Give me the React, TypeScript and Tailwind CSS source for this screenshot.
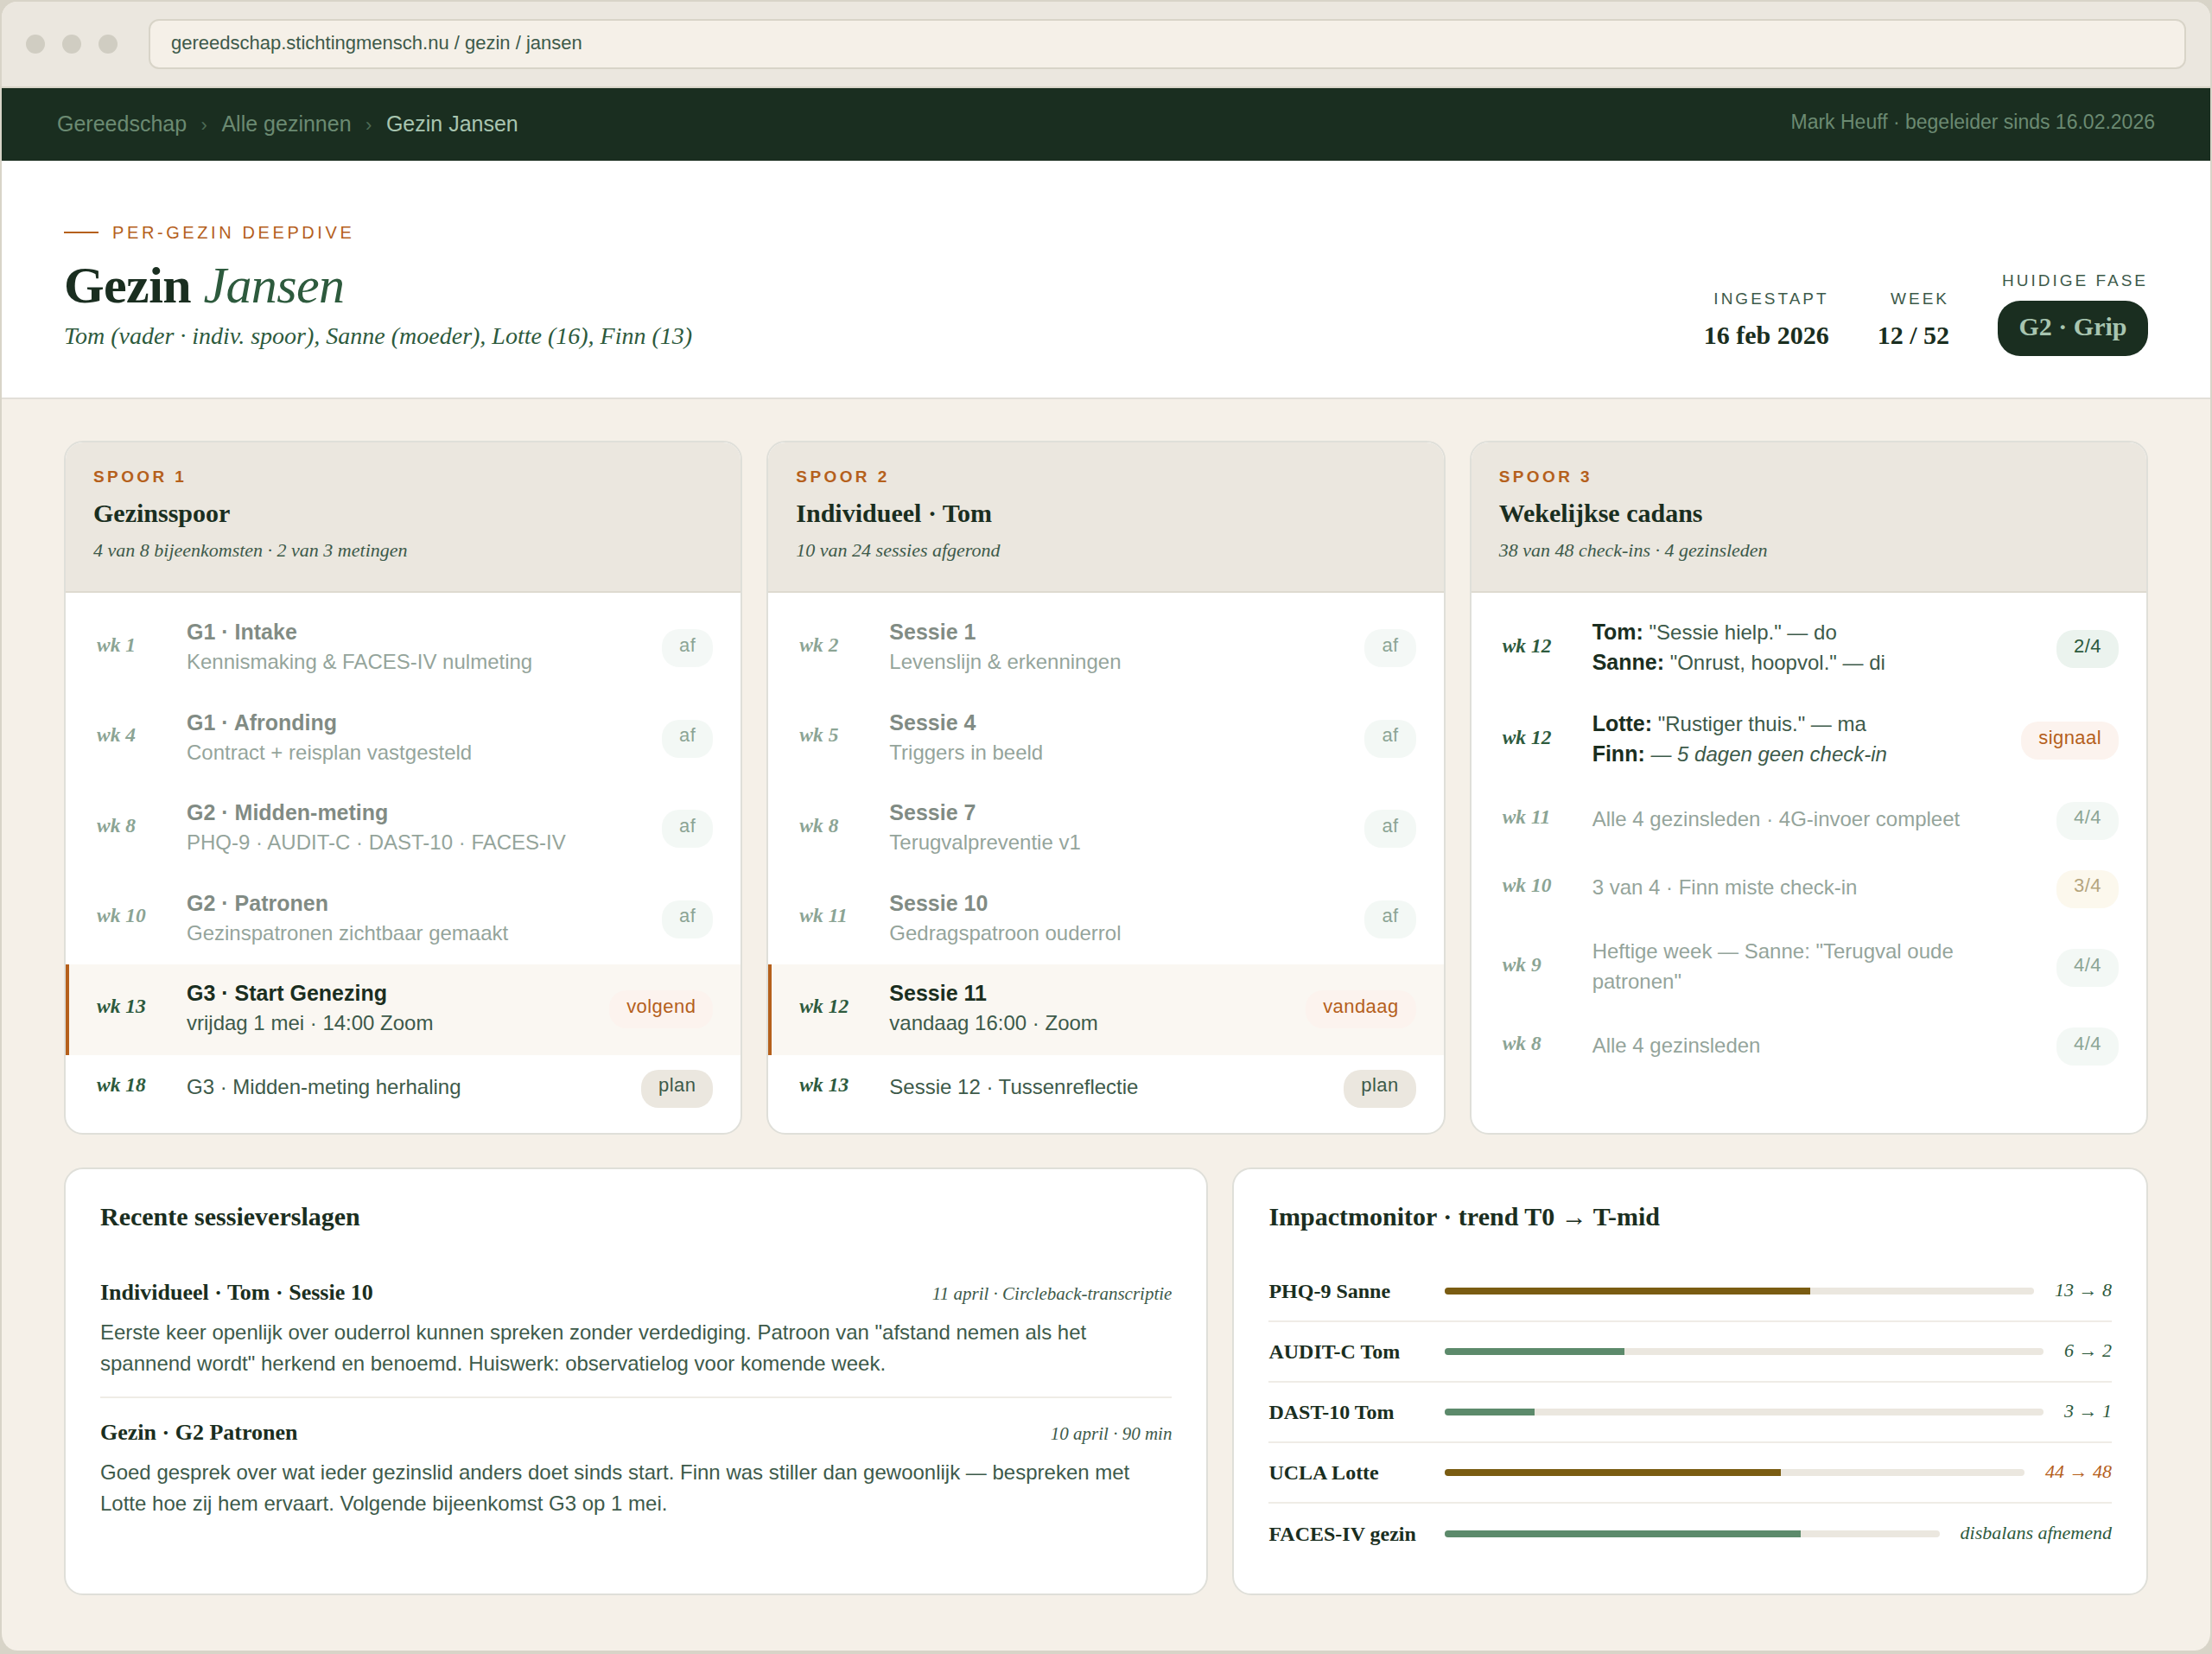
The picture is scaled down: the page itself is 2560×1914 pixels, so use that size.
const serif = "font-['Liberation_Serif',serif]";

type PillKind = "done" | "plan" | "next" | "ok" | "mid";

type Row = {
  wk: string;
  title?: string;
  sub?: string;
  pill: string;
  kind: PillKind;
  faded?: boolean;
  active?: boolean;
};

const pillStyles: Record<PillKind, string> = {
  done: "bg-[#ebf3ee] text-[#2d5a3d]",
  ok: "bg-[#ebf3ee] text-[#2d5a3d]",
  plan: "bg-[#ebe7df] text-[#3d5a4a]",
  next: "bg-[#fcf3ee] text-[#b5601c]",
  mid: "bg-[#faf3e0] text-[#7a5c12]",
};

const spoor1: Row[] = [
  { wk: "wk 1", title: "G1 · Intake", sub: "Kennismaking & FACES-IV nulmeting", pill: "af", kind: "done", faded: true },
  { wk: "wk 4", title: "G1 · Afronding", sub: "Contract + reisplan vastgesteld", pill: "af", kind: "done", faded: true },
  { wk: "wk 8", title: "G2 · Midden-meting", sub: "PHQ-9 · AUDIT-C · DAST-10 · FACES-IV", pill: "af", kind: "done", faded: true },
  { wk: "wk 10", title: "G2 · Patronen", sub: "Gezinspatronen zichtbaar gemaakt", pill: "af", kind: "done", faded: true },
  { wk: "wk 13", title: "G3 · Start Genezing", sub: "vrijdag 1 mei · 14:00 Zoom", pill: "volgend", kind: "next", active: true },
  { wk: "wk 18", sub: "G3 · Midden-meting herhaling", pill: "plan", kind: "plan" },
];

const spoor2: Row[] = [
  { wk: "wk 2", title: "Sessie 1", sub: "Levenslijn & erkenningen", pill: "af", kind: "done", faded: true },
  { wk: "wk 5", title: "Sessie 4", sub: "Triggers in beeld", pill: "af", kind: "done", faded: true },
  { wk: "wk 8", title: "Sessie 7", sub: "Terugvalpreventie v1", pill: "af", kind: "done", faded: true },
  { wk: "wk 11", title: "Sessie 10", sub: "Gedragspatroon ouderrol", pill: "af", kind: "done", faded: true },
  { wk: "wk 12", title: "Sessie 11", sub: "vandaag 16:00 · Zoom", pill: "vandaag", kind: "next", active: true },
  { wk: "wk 13", sub: "Sessie 12 · Tussenreflectie", pill: "plan", kind: "plan" },
];

const Pill = ({ label, kind }: { label: string; kind: PillKind }) => (
  <span
    className={`h-[44px] shrink-0 rounded-[20px] px-5 pb-[8px] flex items-center text-[22px] tracking-[0.44px] ${pillStyles[kind]}`}
  >
    {label}
  </span>
);

const Week = ({ children }: { children: string }) => (
  <div className={`${serif} w-[80px] shrink-0 pb-[8px] text-[23.5px] leading-[35px] font-bold italic text-[#2d5a3d]`}>
    {children}
  </div>
);

const SessionRow = ({ row }: { row: Row }) => (
  <div
    className={`flex items-center gap-6 border-l-4 pl-8 pr-8 ${row.title ? "h-[104.5px]" : "h-[78px]"} ${
      row.active ? "border-[#b5601c] bg-[#faf7f2]" : "border-transparent"
    } ${row.faded ? "opacity-55" : ""}`}
  >
    <Week>{row.wk}</Week>
    <div className="flex-1 min-w-0 pb-[3px]">
      {row.title && <div className="text-[25px] leading-[35px] font-bold text-[#1a2e20]">{row.title}</div>}
      <div className="text-[24px] leading-[34px] text-[#3d5a4a]">{row.sub}</div>
    </div>
    <Pill label={row.pill} kind={row.kind} />
  </div>
);

const CheckRow = ({
  wk,
  pill,
  kind,
  faded,
  children,
  rowHeight,
}: {
  wk: string;
  pill: string;
  kind: PillKind;
  faded?: boolean;
  children: React.ReactNode;
  rowHeight: string;
}) => (
  <div className={`flex items-center gap-6 border-l-4 border-transparent pl-8 pr-8 ${rowHeight} ${faded ? "opacity-55" : ""}`}>
    <Week>{wk}</Week>
    <div className="flex-1 min-w-0 pb-[4px] text-[24px] leading-[35px] text-[#3d5a4a]">{children}</div>
    <Pill label={pill} kind={kind} />
  </div>
);

const Who = ({ children }: { children: string }) => (
  <strong className="text-[25px] font-bold text-[#1a2e20]">{children}</strong>
);

const SpoorHeader = ({ eyebrow, title, sub }: { eyebrow: string; title: string; sub: string }) => (
  <div className="bg-[#ebe7df] border-b-2 border-[#dedad0] px-8 pt-[28px] pb-[32px]">
    <div className="text-[19px] leading-[24px] font-bold tracking-[3.4px] text-[#b5601c]">{eyebrow}</div>
    <div className={`${serif} mt-[10px] text-[30px] leading-[40px] font-bold text-[#1a2e20]`}>{title}</div>
    <div className={`${serif} mt-[8px] text-[22px] leading-[30px] italic text-[#3d5a4a]`}>{sub}</div>
  </div>
);

const cardClass = "rounded-[22px] border-2 border-[#dfdfd9] bg-white overflow-hidden";

const reports = [
  {
    title: "Individueel · Tom · Sessie 10",
    meta: "11 april · Circleback-transcriptie",
    text: 'Eerste keer openlijk over ouderrol kunnen spreken zonder verdediging. Patroon van "afstand nemen als het spannend wordt" herkend en benoemd. Huiswerk: observatielog voor komende week.',
  },
  {
    title: "Gezin · G2 Patronen",
    meta: "10 april · 90 min",
    text: "Goed gesprek over wat ieder gezinslid anders doet sinds start. Finn was stiller dan gewoonlijk — bespreken met Lotte hoe zij hem ervaart. Volgende bijeenkomst G3 op 1 mei.",
  },
];

const impact = [
  { label: "PHQ-9 Sanne", pct: 62, amber: true, value: "13 → 8" },
  { label: "AUDIT-C Tom", pct: 30, value: "6 → 2" },
  { label: "DAST-10 Tom", pct: 15, value: "3 → 1" },
  { label: "UCLA Lotte", pct: 58, amber: true, value: "44 → 48", warn: true },
  { label: "FACES-IV gezin", pct: 72, value: "disbalans afnemend" },
];

const Stat = ({ label, value }: { label: string; value: string }) => (
  <div className="text-right">
    <div className="text-[19px] leading-[24px] tracking-[3px] text-[#3d5a4a] mb-[6px]">{label}</div>
    <div className={`${serif} text-[30px] leading-[48px] font-bold text-[#1a2e20]`}>{value}</div>
  </div>
);

export default function App() {
  return (
    <div className="min-h-screen bg-[#d8d4c8] font-['Liberation_Sans',sans-serif]">
      <div className="h-[1910px] flex flex-col rounded-[20px] border-x-2 border-t-2 border-[#d8d4c8] bg-[#f5f0e8] overflow-hidden">
        {/* Browser chrome */}
        <div className="h-[100px] shrink-0 flex items-center gap-[20px] bg-[#ebe7df] border-b-2 border-[#d8d4c8] px-[28px]">
          <span className="w-[22px] h-[22px] rounded-full bg-[#d0cdc2]" />
          <span className="w-[22px] h-[22px] rounded-full bg-[#d0cdc2]" />
          <span className="w-[22px] h-[22px] rounded-full bg-[#d0cdc2]" />
          <div className="ml-[16px] flex-1 h-[58px] rounded-[12px] border-2 border-[#d8d4c8] bg-[#f5f0e8] px-[24px] pb-[3px] flex items-center text-[22px] text-[#3d5a4a]">
            gereedschap.stichtingmensch.nu / gezin / jansen
          </div>
        </div>

        {/* Breadcrumb bar */}
        <div className="h-[84px] shrink-0 flex items-center justify-between bg-[#1a2e20] px-[64px]">
          <div className="flex items-center text-[25px] text-[#6b8a72]">
            <span>Gereedschap</span>
            <span className="mx-[16.5px] text-[#4d6b55] text-[22px]">›</span>
            <span>Alle gezinnen</span>
            <span className="mx-[16.5px] text-[#4d6b55] text-[22px]">›</span>
            <span className="text-[#a8c5b0]">Gezin Jansen</span>
          </div>
          <div className="pb-[6px] text-[23px] text-[#6b8a72]">Mark Heuff · begeleider sinds 16.02.2026</div>
        </div>

        {/* Hero */}
        <div className="shrink-0 flex items-end justify-between bg-white border-b-2 border-[#e2dfd8] px-[72px] pt-[71px] pb-[48px]">
          <div className="pb-[5px]">
            <div className="flex items-center gap-4 text-[20px] leading-[24px] tracking-[3.6px] text-[#b5601c]">
              <span className="w-[40px] h-[2px] bg-[#b5601c]" />
              PER-GEZIN DEEPDIVE
            </div>
            <h1 className={`${serif} mt-[16px] text-[60px] leading-[66px] tracking-[-0.6px] font-bold text-[#1a2e20]`}>
              Gezin <em className="font-normal text-[#2d5a3d]">Jansen</em>
            </h1>
            <div className={`${serif} mt-[8px] text-[28px] leading-[36px] italic text-[#2d5a3d]`}>
              Tom (vader · indiv. spoor), Sanne (moeder), Lotte (16), Finn (13)
            </div>
          </div>
          <div className="flex items-end gap-[56px]">
            <Stat label="INGESTAPT" value="16 feb 2026" />
            <Stat label="WEEK" value="12 / 52" />
            <div className="text-right">
              <div className="text-[19px] leading-[24px] tracking-[3px] text-[#3d5a4a] mb-[11px]">HUIDIGE FASE</div>
              <div className={`${serif} h-[64px] rounded-[26px] bg-[#1a2e20] px-[24.5px] pb-[5px] flex items-center text-[30px] font-bold text-[#a8c5b0]`}>
                G2 · Grip
              </div>
            </div>
          </div>
        </div>

        {/* Main */}
        <div className="flex-1 px-[72px] pt-[48px]">
          <div className="grid grid-cols-3 gap-[28px]">
            <section className={cardClass}>
              <SpoorHeader eyebrow="SPOOR 1" title="Gezinsspoor" sub="4 van 8 bijeenkomsten · 2 van 3 metingen" />
              <div className="py-[12px]">
                {spoor1.map((r) => (
                  <SessionRow key={r.wk} row={r} />
                ))}
              </div>
            </section>
            <section className={cardClass}>
              <SpoorHeader eyebrow="SPOOR 2" title="Individueel · Tom" sub="10 van 24 sessies afgerond" />
              <div className="py-[12px]">
                {spoor2.map((r) => (
                  <SessionRow key={r.wk + r.pill} row={r} />
                ))}
              </div>
            </section>
            <section className={cardClass}>
              <SpoorHeader eyebrow="SPOOR 3" title="Wekelijkse cadans" sub="38 van 48 check-ins · 4 gezinsleden" />
              <div className="py-[12px]">
                <CheckRow wk="wk 12" pill="2/4" kind="ok" rowHeight="h-[106px]">
                  <div><Who>Tom:</Who> "Sessie hielp." — do</div>
                  <div><Who>Sanne:</Who> "Onrust, hoopvol." — di</div>
                </CheckRow>
                <CheckRow wk="wk 12" pill="signaal" kind="next" rowHeight="h-[106px]">
                  <div><Who>Lotte:</Who> "Rustiger thuis." — ma</div>
                  <div><Who>Finn:</Who> <em>— 5 dagen geen check-in</em></div>
                </CheckRow>
                <CheckRow wk="wk 11" pill="4/4" kind="ok" faded rowHeight="h-[79px]">
                  Alle 4 gezinsleden · 4G-invoer compleet
                </CheckRow>
                <CheckRow wk="wk 10" pill="3/4" kind="mid" faded rowHeight="h-[79px]">
                  3 van 4 · Finn miste check-in
                </CheckRow>
                <CheckRow wk="wk 9" pill="4/4" kind="ok" faded rowHeight="h-[104px]">
                  Heftige week — Sanne: "Terugval oude patronen"
                </CheckRow>
                <CheckRow wk="wk 8" pill="4/4" kind="ok" faded rowHeight="h-[78px]">
                  Alle 4 gezinsleden
                </CheckRow>
              </div>
            </section>
          </div>

          <div className="mt-[38px] h-[495px] grid grid-cols-[1.25fr_1fr] gap-[28px]">
            <section className={`${cardClass} px-[40px] pt-[35px]`}>
              <h2 className={`${serif} text-[30px] leading-[40px] font-bold text-[#1a2e20]`}>Recente sessieverslagen</h2>
              <div className="mt-[50px]">
                {reports.map((r, i) => (
                  <div key={r.title} className={i === 0 ? "pb-[20px] border-b-2 border-[#efece6]" : "pt-[22px]"}>
                    <div className="flex items-baseline justify-between">
                      <div className={`${serif} text-[26px] leading-[36px] font-bold text-[#1a2e20]`}>{r.title}</div>
                      <div className={`${serif} text-[21px] italic text-[#3d5a4a]`}>{r.meta}</div>
                    </div>
                    <p className="mt-[10px] text-[24px] leading-[36px] text-[#3d5a4a]">{r.text}</p>
                  </div>
                ))}
              </div>
            </section>
            <section className={`${cardClass} px-[40px] pt-[35px]`}>
              <h2 className={`${serif} text-[30px] leading-[40px] font-bold text-[#1a2e20]`}>Impactmonitor · trend T0 → T-mid</h2>
              <div className="mt-[32px]">
                {impact.map((m, i) => (
                  <div
                    key={m.label}
                    className={`h-[70px] flex items-center gap-6 ${i < impact.length - 1 ? "border-b-2 border-[#efece6]" : ""}`}
                  >
                    <div className={`${serif} w-[180px] shrink-0 text-[24px] font-bold text-[#1a2e20]`}>{m.label}</div>
                    <div className="flex-1 h-[8px] rounded-[4px] bg-[#ebe7df] overflow-hidden">
                      <div
                        className={`h-full ${m.amber ? "bg-[#7a5c12]" : "bg-[#5c8a6b]"}`}
                        style={{ width: `${m.pct}%` }}
                      />
                    </div>
                    <div className={`${serif} shrink-0 pb-[3px] text-[22px] italic ${m.warn ? "text-[#b5601c]" : "text-[#2d5a3d]"}`}>
                      {m.value}
                    </div>
                  </div>
                ))}
              </div>
            </section>
          </div>
        </div>
      </div>
    </div>
  );
}
